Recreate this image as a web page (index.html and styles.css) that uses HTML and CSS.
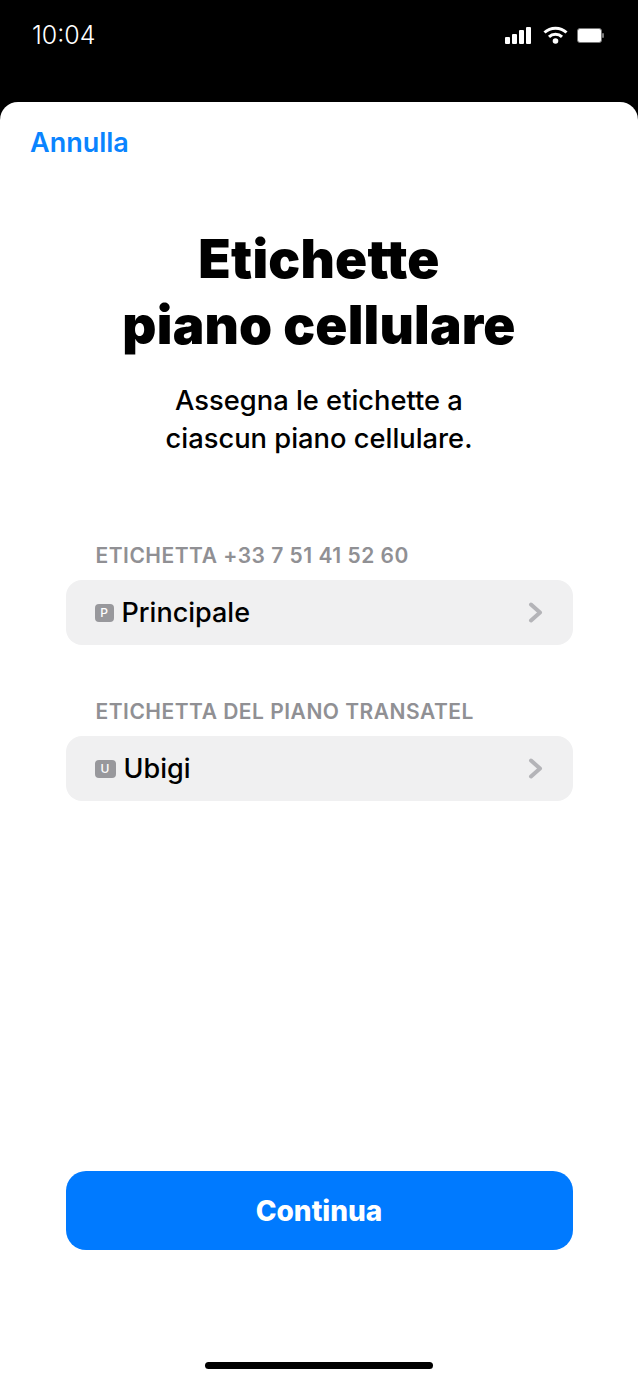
FILE: index.html
```html
<!DOCTYPE html>
<html lang="it">
<head>
    <meta charset="UTF-8">
    <meta name="viewport" content="width=device-width, initial-scale=1.0">
    <title>Etichette piano cellulare</title>
    <link rel="stylesheet" href="styles.css">
</head>
<body>
    <!-- Status bar -->
    <div class="status-bar">
        <span class="time">10:04</span>
        <div class="status-icons">
            <svg class="signal" width="26" height="17" viewBox="0 0 26 17" fill="#fff">
                <rect x="0" y="10" width="5" height="7" rx="1"/>
                <rect x="7" y="7" width="5" height="10" rx="1"/>
                <rect x="14" y="3" width="5" height="14" rx="1"/>
                <rect x="21" y="0" width="5" height="17" rx="1"/>
            </svg>
            <svg width="25" height="18" viewBox="0 0 25 18" fill="none" stroke="#fff" stroke-width="3">
                <path d="M1.5 6.5C7.5 .8 17.500 .8 23.500 6.500"/>
                <path d="M6 10.800C9.500 7.500 15.500 7.500 19 10.800"/>
                <circle cx="12.500" cy="15" r="2.800" fill="#fff" stroke="none"/>
            </svg>
            <svg width="27" height="15" viewBox="0 0 27 15">
                <rect x=".5" y=".5" width="24" height="14" rx="2.500" fill="#fff" stroke="#777"/>
                <rect x="25" y="5" width="2" height="5" rx="1" fill="#777"/>
            </svg>
        </div>
    </div>

    <!-- Sheet -->
    <main class="sheet">
        <a class="cancel" href="#">Annulla</a>

        <h1 class="title">Etichette<br>piano cellulare</h1>
        <p class="subtitle">Assegna le etichette a<br>ciascun piano cellulare.</p>

        <section class="plans">
            <div class="plan">
                <div class="plan-label">ETICHETTA +33 7 51 41 52 60</div>
                <div class="plan-row">
                    <span class="badge">P</span>
                    <span class="plan-name">Principale</span>
                    <svg class="chevron" width="15" height="22" viewBox="0 0 15 22" fill="none">
                        <path d="M3 2.500l9 8-9 8"/>
                    </svg>
                </div>
            </div>
            <div class="plan">
                <div class="plan-label">ETICHETTA DEL PIANO TRANSATEL</div>
                <div class="plan-row">
                    <span class="badge badge-wide">U</span>
                    <span class="plan-name">Ubigi</span>
                    <svg class="chevron" width="15" height="22" viewBox="0 0 15 22" fill="none">
                        <path d="M3 2.500l9 8-9 8"/>
                    </svg>
                </div>
            </div>
        </section>

        <button class="btn-continue">Continua</button>
        <div class="home-bar"></div>
    </main>
</body>
</html>
```

FILE: styles.css
```css
html, body {
    height: 100%;
}

body {
    font-family: Inter, "Liberation Sans", sans-serif;
    margin: 0;
    background-color: #000;
    color: #000;
    display: flex;
    flex-direction: column;
    overflow: hidden;
}

.status-bar {
    height: 102px;
    flex-shrink: 0;
    box-sizing: border-box;
    padding: 20px 34px 0 32px;
    display: flex;
    justify-content: space-between;
    align-items: flex-start;
    color: #fff;
}

.time {
    font-size: 25px;
    font-weight: 300;
    line-height: 30px;
}

.status-icons {
    display: flex;
    align-items: center;
    gap: 9px;
    margin-top: 6px;
}

.signal {
    margin-right: 3px;
}

.sheet {
    flex: 1;
    background-color: #fff;
    border-radius: 18px 18px 0 0;
    display: flex;
    flex-direction: column;
    align-items: center;
    padding-top: 24px;
}

.cancel {
    align-self: flex-start;
    margin-left: 30px;
    color: #0a84ff;
    font-size: 27px;
    font-weight: 600;
    line-height: 34px;
    text-decoration: none;
}

.title {
    margin: 66px 0 0;
    font-size: 53px;
    font-weight: 900;
    font-variant-ligatures: none;
    line-height: 66px;
    letter-spacing: 0.2px;
    text-align: center;
}

.subtitle {
    margin: 24px 0 0;
    font-size: 27.300px;
    font-weight: 500;
    line-height: 38px;
    text-align: center;
}

.plans {
    width: 507px;
    margin-top: 85px;
    display: flex;
    flex-direction: column;
    gap: 54px;
}

.plan-label {
    padding-left: 30px;
    margin-bottom: 11px;
    color: #909094;
    font-size: 21px;
    font-weight: 600;
    letter-spacing: 0.5px;
    line-height: 26px;
}

.plan-row {
    height: 65px;
    box-sizing: border-box;
    padding: 0 30px 0 29px;
    display: flex;
    align-items: center;
    background-color: #f0f0f1;
    border-radius: 16px;
}

.badge {
    width: 19px;
    height: 18px;
    margin-right: 8px;
    background-color: #98989c;
    border-radius: 4px;
    color: #fff;
    font-size: 12px;
    font-weight: 500;
    line-height: 18px;
    text-align: center;
}

.badge-wide {
    width: 21px;
}

.plan-name {
    flex: 1;
    font-size: 27px;
    font-weight: 500;
}

.chevron path {
    stroke: #b4b4b8;
    stroke-width: 4;
    stroke-linecap: round;
    stroke-linejoin: round;
}

.btn-continue {
    width: 507px;
    height: 79px;
    margin-top: auto;
    background-color: #007aff;
    border: none;
    border-radius: 20px;
    color: #fff;
    font-family: inherit;
    font-size: 28px;
    font-weight: 800;
}

.home-bar {
    width: 228px;
    height: 7px;
    margin: 112px 0 13px;
    background-color: #000;
    border-radius: 4px;
}
```
